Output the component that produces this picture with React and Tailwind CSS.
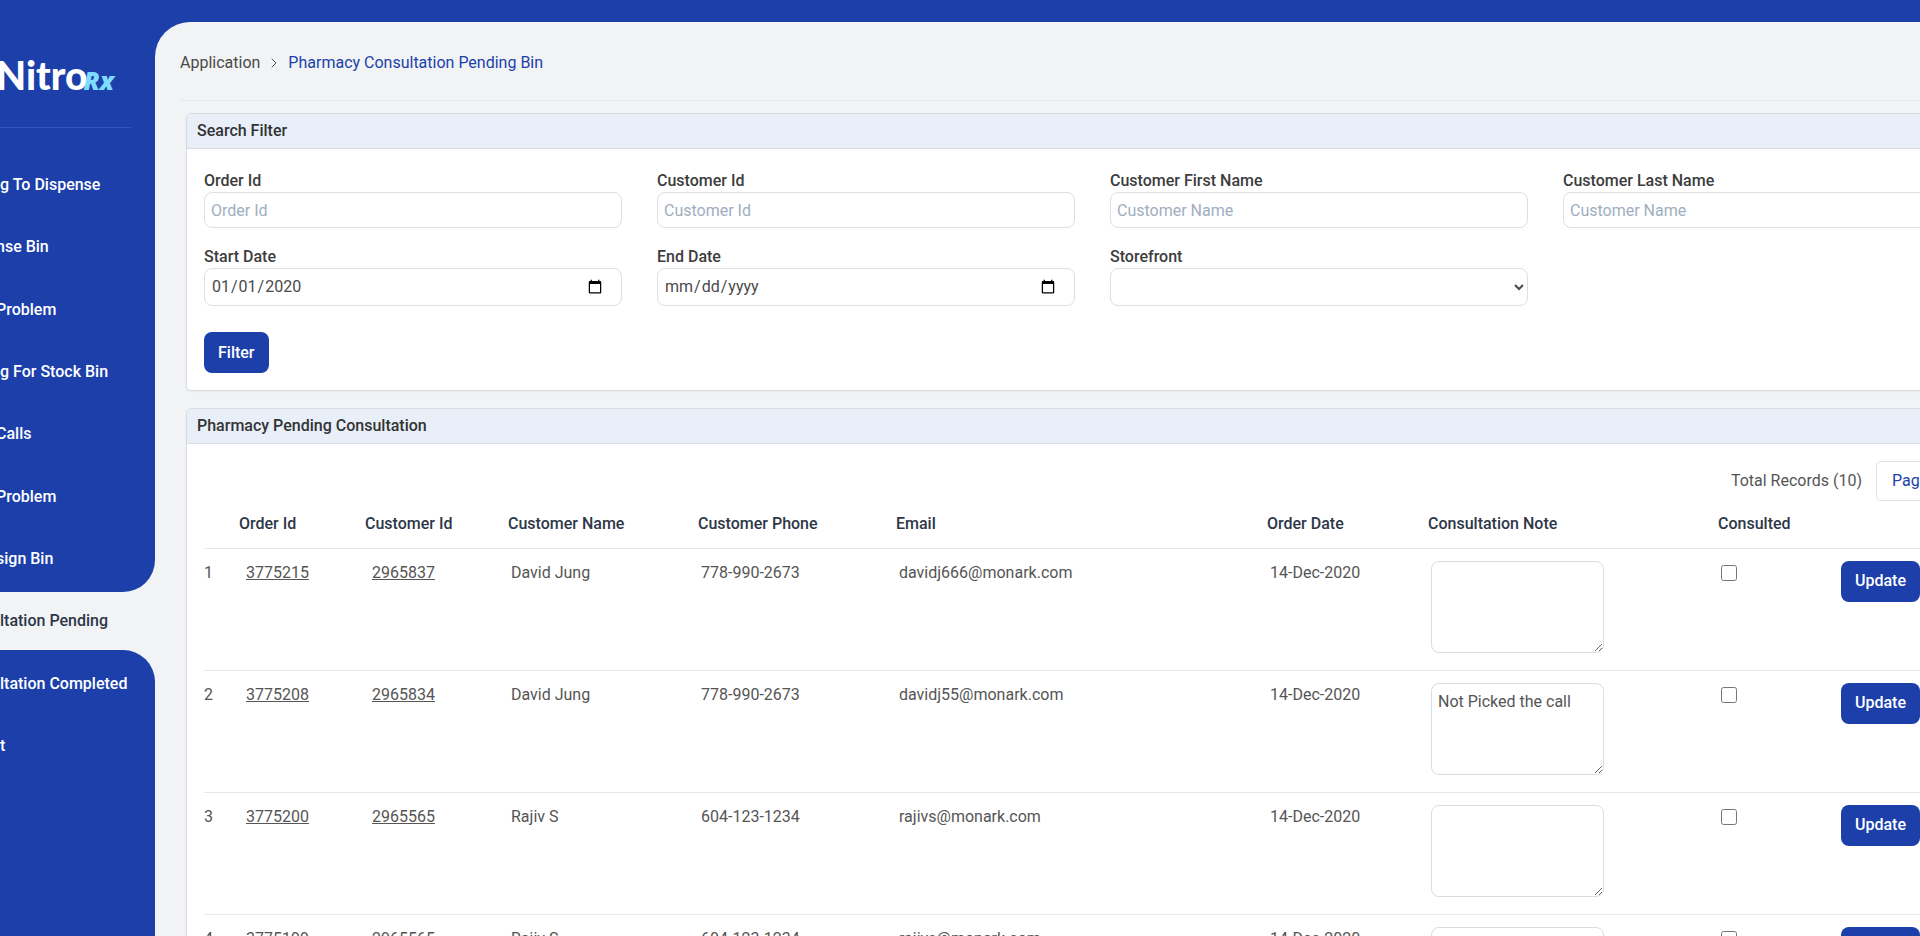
import { ChevronRight } from "lucide-react";

const NAV = [
  { label: "g To Dispense" },
  { label: "nse Bin", tucked: true },
  { label: "Problem", tucked: true },
  { label: "g For Stock Bin" },
  { label: "Calls", tucked: true },
  { label: "Problem", tucked: true },
  { label: "sign Bin", tucked: true },
  { label: "ltation Pending", active: true },
  { label: "ltation Completed" },
  { label: "t" },
];

const FIELDS = [
  { id: "order-id", label: "Order Id", type: "text", placeholder: "Order Id" },
  { id: "customer-id", label: "Customer Id", type: "text", placeholder: "Customer Id" },
  { id: "first-name", label: "Customer First Name", type: "text", placeholder: "Customer Name" },
  { id: "last-name", label: "Customer Last Name", type: "text", placeholder: "Customer Name" },
  { id: "start-date", label: "Start Date", type: "date", value: "2020-01-01" },
  { id: "end-date", label: "End Date", type: "date" },
  { id: "storefront", label: "Storefront", type: "select" },
];

const ROWS = [
  { order: "3775215", customer: "2965837", name: "David Jung", phone: "778-990-2673", email: "davidj666@monark.com", note: "" },
  { order: "3775208", customer: "2965834", name: "David Jung", phone: "778-990-2673", email: "davidj55@monark.com", note: "Not Picked the call" },
  { order: "3775200", customer: "2965565", name: "Rajiv S", phone: "604-123-1234", email: "rajivs@monark.com", note: "" },
  { order: "3775199", customer: "2965565", name: "Rajiv S", phone: "604-123-1234", email: "rajivs@monark.com", note: "" },
];

function NavItem({ item }) {
  return (
    <li
      className={
        item.active
          ? "relative flex h-[58px] items-center bg-[#f1f3f5] text-[#2d3748]"
          : "flex h-[58px] items-center text-white"
      }
    >
      {item.active && (
        <>
          <span className="absolute right-0 bottom-full h-8 w-8 bg-[#f1f3f5]">
            <span className="block h-full w-full rounded-br-[32px] bg-[#1c3faa]" />
          </span>
          <span className="absolute top-full right-0 h-8 w-8 bg-[#f1f3f5]">
            <span className="block h-full w-full rounded-tr-[32px] bg-[#1c3faa]" />
          </span>
        </>
      )}
      <a href="#" className={"relative z-10 font-medium whitespace-nowrap " + (item.tucked ? "-ml-1" : "")}>
        {item.label}
      </a>
    </li>
  );
}

function Card({ title, children }) {
  return (
    <section className="overflow-hidden rounded-[5px] border border-[#d9dde1] bg-white shadow-xs">
      <h2 className="flex h-[35px] items-center border-b border-[#d9dde1] bg-[#e8eff9] px-2.5 font-medium text-[#333]">
        {title}
      </h2>
      {children}
    </section>
  );
}

function Field({ field }) {
  const box = "block w-full rounded-lg border border-[#dcdfe3] bg-white text-[#4a4a4a]";
  return (
    <div className="flex flex-col">
      <label htmlFor={field.id} className="leading-[22px] font-medium text-[#3d3d3d]">
        {field.label}
      </label>
      {field.type === "select" ? (
        <select id={field.id} className={box + " h-[38px] px-1.5"} />
      ) : field.type === "date" ? (
        <input id={field.id} type="date" defaultValue={field.value} className={box + " h-[38px] pr-4 pl-1.5"} />
      ) : (
        <input id={field.id} type="text" placeholder={field.placeholder} className={box + " h-9 px-1.5 placeholder:text-[#a0aec0]"} />
      )}
    </div>
  );
}

function Row({ row, index }) {
  return (
    <tr className="h-[122px] border-t border-[#e5e8ec] align-top">
      <td className="pt-3">{index}</td>
      <td className="pt-3 pl-[7px]"><a href="#" className="underline">{row.order}</a></td>
      <td className="pt-3 pl-[7px]"><a href="#" className="underline">{row.customer}</a></td>
      <td className="pt-3 pl-[3px]">{row.name}</td>
      <td className="pt-3 pl-[3px]">{row.phone}</td>
      <td className="pt-3 pl-[3px]">{row.email}</td>
      <td className="pt-3 pl-[3px]">14-Dec-2020</td>
      <td className="pt-3 pl-[3px]">
        <textarea
          aria-label={"Consultation note " + row.order}
          defaultValue={row.note}
          className="block h-[92px] w-[173px] rounded-lg border border-[#d9dde1] bg-white px-1.5 py-1.5"
        />
      </td>
      <td className="pt-4 pl-[3px]">
        <input type="checkbox" aria-label={"Consulted " + row.order} className="block h-4 w-4" />
      </td>
      <td className="pt-3 pl-[3px]">
        <button type="button" className="h-[41px] rounded-lg bg-[#1c3faa] px-3.5 font-medium text-white">Update</button>
      </td>
    </tr>
  );
}

export default function App() {
  return (
    <div className="flex h-screen overflow-hidden bg-[#1c3faa] font-['Roboto',sans-serif] text-base">
      <aside className="w-[155px] shrink-0 overflow-hidden">
        <div className="mr-6 flex h-32 items-end border-b border-[#3555bb] pb-8">
          <a href="#" aria-label="NitroRx" className="-ml-1 flex items-baseline leading-none">
            <span className="font-['Lato',sans-serif] text-[39px] font-black text-white">Nitro</span>
            <span className="-ml-1 font-['Open_Sans',sans-serif] text-[25px] font-extrabold text-[#7fdcff] italic">Rx</span>
          </a>
        </div>
        <nav className="pt-7">
          <ul className="flex h-[619px] flex-col justify-between">
            {NAV.map((item, i) => <NavItem key={i} item={item} />)}
          </ul>
        </nav>
      </aside>

      <main className="mt-[22px] -mr-[111px] min-w-0 flex-1 rounded-tl-[35px] bg-[#f1f3f5] pr-8 pl-[25px]">
        <nav aria-label="Breadcrumb" className="flex h-[79px] items-center border-b border-[#e2e8f0] pt-1">
          <a href="#" className="text-[#4a4a4a]">Application</a>
          <ChevronRight size={16} strokeWidth={1.5} className="mx-1.5 text-[#4a5568]" />
          <a href="#" className="text-[#1c3faa]">Pharmacy Consultation Pending Bin</a>
        </nav>

        <div className="flex flex-col gap-[17px] pt-3 pl-1.5">
          <Card title="Search Filter">
            <form className="px-[17px] pt-[21px] pb-[17px]" onSubmit={(e) => e.preventDefault()}>
              <div className="grid grid-cols-4 gap-x-[35px] gap-y-[18px]">
                {FIELDS.map((field) => <Field key={field.id} field={field} />)}
              </div>
              <button type="submit" className="mt-[26px] h-[41px] rounded-lg bg-[#1c3faa] px-3.5 font-medium text-white">
                Filter
              </button>
            </form>
          </Card>

          <Card title="Pharmacy Pending Consultation">
            <div className="px-[17px] pt-[17px]">
              <div className="flex items-center justify-end gap-3.5 text-[#555]">
                <span>Total Records (10)</span>
                <button type="button" className="h-10 w-[105px] rounded-[5px] border border-[#dcdfe3] px-[15px] text-left text-[#1c3faa]">
                  Page 1
                </button>
              </div>
              <table className="w-full table-fixed border-collapse text-[#555]">
                <colgroup>
                  <col className="w-[35px]" />
                  <col className="w-[126px]" />
                  <col className="w-[143px]" />
                  <col className="w-[190px]" />
                  <col className="w-[198px]" />
                  <col className="w-[371px]" />
                  <col className="w-[161px]" />
                  <col className="w-[290px]" />
                  <col className="w-[120px]" />
                  <col />
                </colgroup>
                <thead>
                  <tr className="h-[47px] text-left text-[#2d3748]">
                    <th aria-label="Number" />
                    {["Order Id", "Customer Id", "Customer Name", "Customer Phone", "Email", "Order Date", "Consultation Note", "Consulted"].map((h) => (
                      <th key={h} className="font-medium">{h}</th>
                    ))}
                    <th aria-label="Actions" />
                  </tr>
                </thead>
                <tbody>
                  {ROWS.map((row, i) => <Row key={row.order} row={row} index={i + 1} />)}
                </tbody>
              </table>
            </div>
          </Card>
        </div>
      </main>
    </div>
  );
}
